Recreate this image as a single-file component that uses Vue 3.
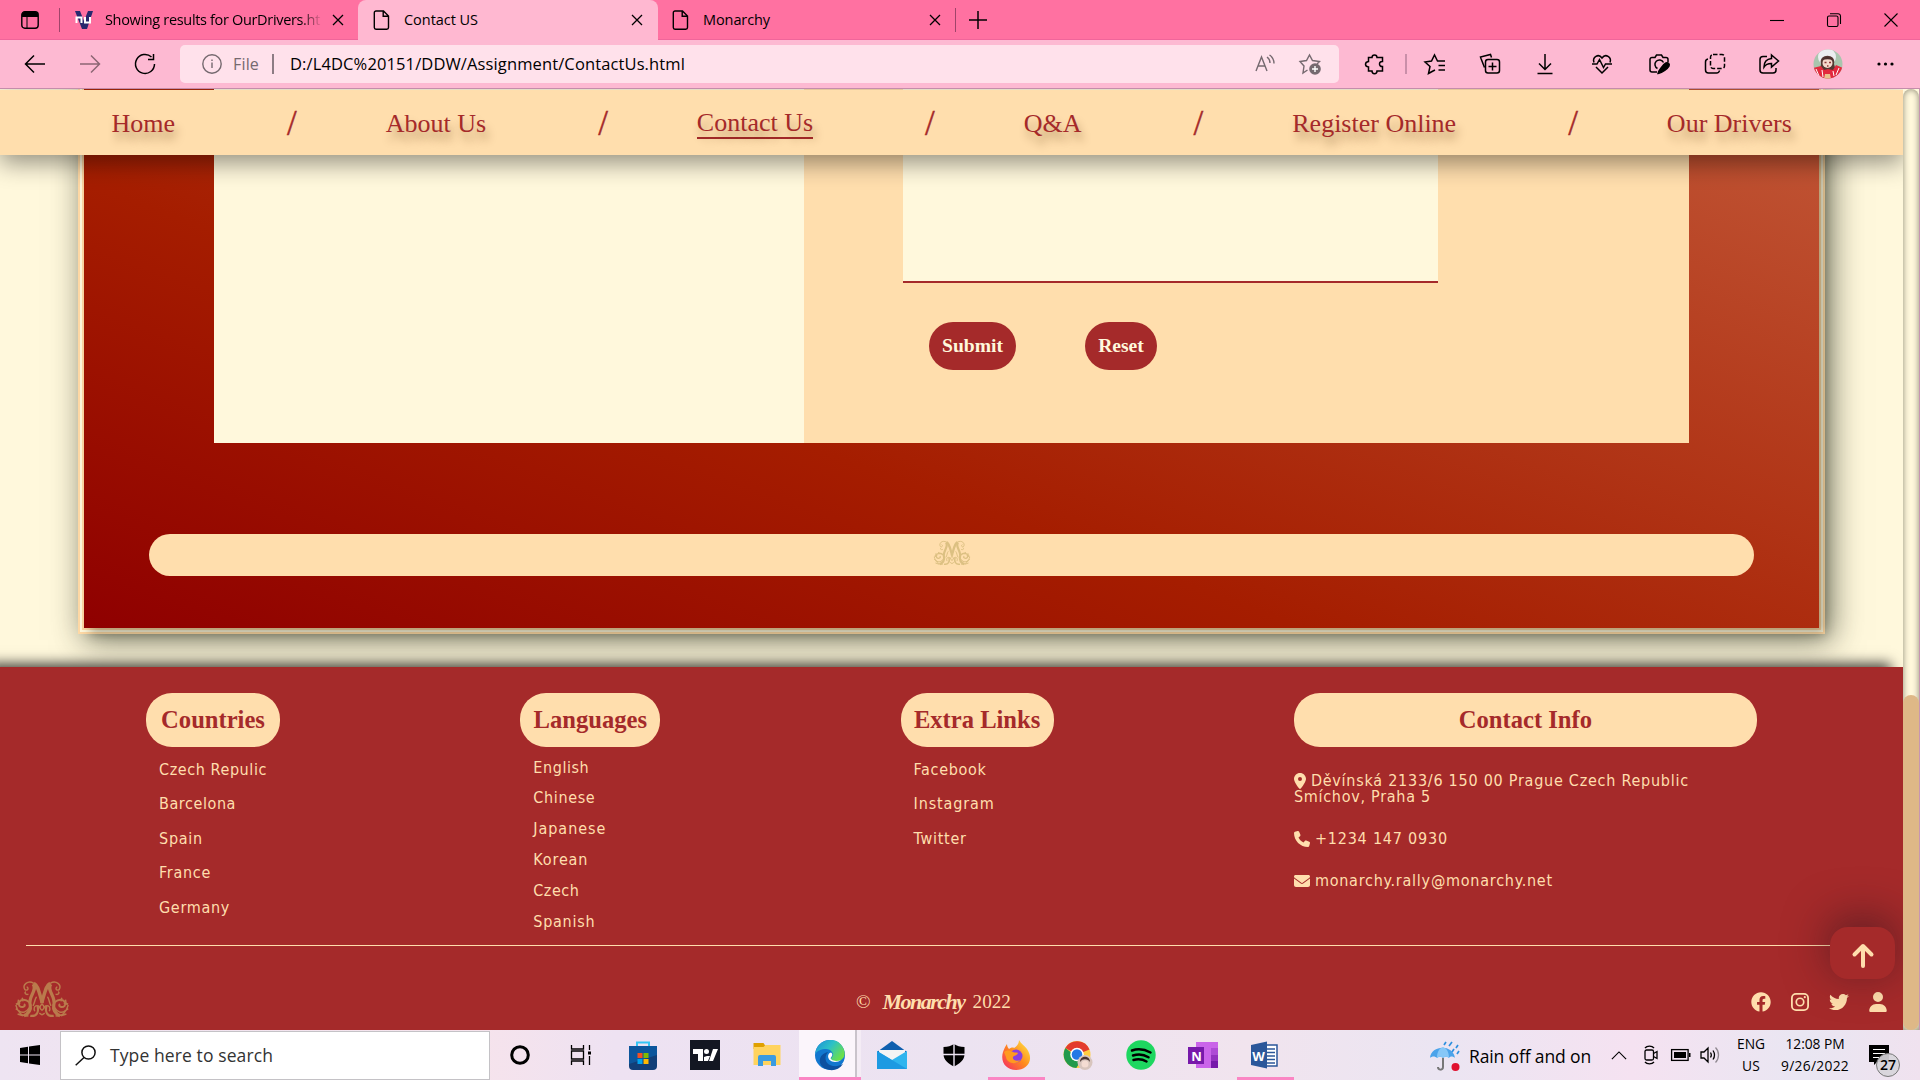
<script setup>
/* Spreads a label over a given width by adjusting its tracking. */
const vFit = {
  mounted(el, { value }) {
    if (!value) return
    const natural = el.getBoundingClientRect().width
    el.style.letterSpacing = (value - natural) / el.textContent.length + 'px'
  },
}

const page = '<path d="M3 1h7.5l5 5v11.500a1.700 1.700 0 0 1-1.700 1.700H3A1.700 1.700 0 0 1 1.300 17.500V2.700A1.700 1.700 0 0 1 3 1zM10.200 1.300v5h5"/>'

const tools = [
  { gap: 35, w: 22, d: '<path d="M8 4.500C8 1 13 1 13 4.500h5.500v4c-4-.5-4 5.500 0 5v4.500H13c0 3.500-5 3.500-5 0H4.500v-4C.5 13.500.5 9 4.500 8.500v-4z"/>' },
  { gap: 19, w: 1, bar: true },
  { gap: 17, w: 22, d: '<path d="M9 18l-4.500 2.500L6 13.500 1 9l6.500-1L10.500 2l3 6H21M14.500 12.500H21M14.500 17H21M9 18l2-1"/>' },
  { gap: 33, w: 22, d: '<path d="M5.500 14.500L2 5.500 1.500 4l10-2.500 1 3"/><rect x="6.500" y="6.500" width="14" height="13.500" rx="2.500"/><path d="M13.500 9.500v8M9.500 13.500h8"/>' },
  { gap: 33, w: 22, d: '<path d="M11 1v15M5 10.500l6 6 6-6M3.500 20.500h15"/>' },
  { gap: 35, w: 22, d: '<path d="M3 9.500C1 4 7.500 0 11 5c3.500-5 10-1 8 4.500M5 14l6 6 6-6M1 11h5l2.500-4.500 4 8L14.500 11H21"/>' },
  { gap: 35, w: 22, d: '<path d="M9 19H4a2 2 0 0 1-2-2V6.500a2 2 0 0 1 2-2h3L8.500 2h5L15 4.500h3a2 2 0 0 1 2 2V9M9.500 15.500a4.500 4.500 0 1 1 6-6"/><path d="M10 20.500c.5-3 5.500-9 8-10.500 2-1 4 1 3 3-1.500 2.500-6.500 7-11 7.500z" fill="currentColor"/>' },
  { gap: 34, w: 22, d: '<path d="M4 6a3 3 0 0 0-2.500 3v8a3 3 0 0 0 3 3h8a3 3 0 0 0 3-2.500"/><rect x="6.500" y="1.500" width="14" height="14" rx="2.500" stroke-dasharray="4.500 2"/>' },
  { gap: 32, w: 22, d: '<path d="M9 3.500H5a3 3 0 0 0-3 3V17a3 3 0 0 0 3 3h10a3 3 0 0 0 3-3v-2"/><path d="M13.500 2l7 6-7 6v-3.500c-4 0-6 1-7.500 3.500 0-5 3-8 7.500-8.500z"/>' },
]

const nav = ['Home', 'About Us', 'Contact Us', 'Q&A', 'Register Online', 'Our Drivers']

const columns = [
  { title: 'Countries', w: 134, cls: 'loose', links: [['Czech Repulic', 108], ['Barcelona', 77], ['Spain', 44], ['France', 52], ['Germany', 71]] },
  { title: 'Languages', w: 140, cls: 'tight', links: [['English', 56], ['Chinese', 62], ['Japanese', 73], ['Korean', 55], ['Czech', 46], ['Spanish', 62]] },
  { title: 'Extra Links', w: 153, cls: 'loose', links: [['Facebook', 73], ['Instagram', 81], ['Twitter', 53]] },
]

const contact = [
  { vb: '0 0 384 512', w: 12, h: 16, text: 'Děvínská 2133/6 150 00 Prague Czech Republic', fit: 378, extra: 'Smíchov, Praha 5', d: 'M215.700 499.200C267 435 384 279.400 384 192 384 86 298 0 192 0S0 86 0 192c0 87.400 117 243 168.300 307.200 12.300 15.300 35.100 15.300 47.400 0zM192 128a64 64 0 1 1 0 128 64 64 0 1 1 0-128z' },
  { vb: '0 0 512 512', w: 16, h: 16, text: '+1234 147 0930', fit: 133, d: 'M164.900 24.600c-7.700-18.600-28-28.500-47.400-23.200l-88 24C12.100 30.200 0 46 0 64c0 247.400 200.600 448 448 448 18 0 33.800-12.100 38.600-29.500l24-88c5.300-19.400-4.600-39.700-23.200-47.400l-96-40c-16.300-6.800-35.200-2.100-46.300 11.600L304.700 368C234.300 334.700 177.300 277.700 144 207.300L193.300 167c13.700-11.200 18.400-30 11.600-46.300l-40-96z' },
  { vb: '0 0 512 512', w: 16, h: 16, text: 'monarchy.rally@monarchy.net', fit: 238, d: 'M48 64C21.500 64 0 85.500 0 112c0 15.100 7.100 29.300 19.200 38.400l217.600 163.200c11.400 8.500 27 8.500 38.400 0l217.600-163.200c12.100-9.100 19.200-23.300 19.200-38.400 0-26.500-21.500-48-48-48H48zM0 176v208c0 35.300 28.700 64 64 64h384c35.300 0 64-28.700 64-64V176L294.400 339.200c-22.800 17.100-54 17.100-76.800 0L0 176z' },
]

const social = [
  { vb: '0 0 512 512', d: 'M504 256C504 119 393 8 256 8S8 119 8 256c0 123.780 90.690 226.380 209.250 245V327.690h-63V256h63v-54.640c0-62.150 37-96.480 93.670-96.480 27.140 0 55.520 4.840 55.520 4.840v61h-31.280c-30.800 0-40.410 19.120-40.410 38.730V256h68.780l-11 71.690h-57.780V501C413.310 482.380 504 379.780 504 256z' },
  { vb: '0 0 20 20', d: 'M6 1h8a5 5 0 0 1 5 5v8a5 5 0 0 1-5 5H6a5 5 0 0 1-5-5V6a5 5 0 0 1 5-5zm0 1.800A3.200 3.200 0 0 0 2.800 6v8A3.200 3.200 0 0 0 6 17.200h8a3.200 3.200 0 0 0 3.200-3.200V6A3.200 3.200 0 0 0 14 2.800zM10 5.400a4.600 4.600 0 1 1 0 9.200 4.600 4.600 0 0 1 0-9.200zm0 1.700a2.900 2.900 0 1 0 0 5.800 2.900 2.900 0 0 0 0-5.800zM14.800 4.100a1.100 1.100 0 1 1 0 2.200 1.100 1.100 0 0 1 0-2.200z' },
  { vb: '0 0 512 512', d: 'M459.370 151.716c.325 4.548.325 9.097.325 13.645 0 138.720-105.583 298.558-298.558 298.558-59.452 0-114.680-17.219-161.137-47.106 8.447.974 16.568 1.299 25.340 1.299 49.055 0 94.213-16.568 130.274-44.832-46.132-.975-84.792-31.188-98.112-72.772 6.498.974 12.995 1.624 19.818 1.624 9.421 0 18.843-1.300 27.614-3.573-48.081-9.747-84.143-51.980-84.143-102.985v-1.299c13.969 7.797 30.214 12.670 47.431 13.319-28.264-18.843-46.781-51.005-46.781-87.391 0-19.492 5.197-37.360 14.294-52.954 51.655 63.675 129.300 105.258 216.365 109.807-1.624-7.797-2.599-15.918-2.599-24.040 0-57.828 46.782-104.934 104.934-104.934 30.213 0 57.502 12.670 76.670 33.137 23.715-4.548 46.456-13.320 66.599-25.340-7.798 24.366-24.366 44.833-46.132 57.827 21.117-2.273 41.584-8.122 60.426-16.243-14.292 20.791-32.161 39.308-52.628 54.253z' },
  { vb: '0 0 448 512', d: 'M224 256a128 128 0 1 0 0-256 128 128 0 1 0 0 256zm-49.700 48C77.800 304 0 381.800 0 478.300 0 496.900 15.100 512 33.700 512h380.600c18.600 0 33.700-15.100 33.700-33.700C448 381.800 370.200 304 273.700 304z' },
]

const crest = '<g id="half"><path d="M20 3C26 9 14 17 17 26c1 6-3 10-7 12" stroke-width="3.600"/><path d="M21 2c5 2 6 12 9.500 22" stroke-width="3.800"/><path d="M21 2C14-2 8 4 11 9c3 2 5-2 2-3M12 11c-2 2 0 4 3 3"/><path d="M16 23C9 17 2 22 5 27c3 3 8 0 5-2" stroke-width="2.200"/><path d="M1 26c2 8 7 13 14 12M4 32c4 4 9 2 12-3M1 30l4 3M3 36l6 2M4 20l-1 6M8 18l1 4M1 25l5-1"/><path d="M17 38c7 1 10-4 8-11" stroke-width="2.400"/><path d="M22 33c-3-6 4-9 6-3M20 27c2-3 2-8 4-10M30 25c-3 2-3 5 0 7M27 35l3 2"/></g>'

const apps = [
  { name: 'store', d: '<path d="M9 8V2.500h12V8" fill="none" stroke="#35c5f5" stroke-width="2"/><path d="M1 6h28v20a4 4 0 0 1-4 4H5a4 4 0 0 1-4-4z" fill="#123f78"/><path d="M1 6h28v9L1 24z" fill="#0b5fa8" opacity=".75"/><path d="M9.500 13h5v5h-5z" fill="#f25022"/><path d="M15.500 13h5v5h-5z" fill="#7fba00"/><path d="M9.500 19h5v5h-5z" fill="#00a4ef"/><path d="M15.500 19h5v5h-5z" fill="#ffb900"/>' },
  { name: 'charts', d: '<path d="M0 0h30v30H0z" fill="#131722"/><path d="M3 9h10v12H8v-7H3zM19 21l4-12h5l-5 12z" fill="#fff"/><circle cx="16.500" cy="11.500" r="2.500" fill="#fff"/><path d="M14 21v-4l3-1h3l-2 5z" fill="#fff"/>' },
  { name: 'files', d: '<path d="M1.500 3h10l2 3v3h-12z" fill="#e0a000"/><path d="M1.500 7h10l2-2h15v20h-27z" fill="#ffd35e"/><path d="M6 26V17a2 2 0 0 1 2-2h14a2 2 0 0 1 2 2v9h-5v-5h-8v5z" fill="#3a9be0"/>' },
  { name: 'edge', open: 'front', d: '<defs><linearGradient id="eg" x1="0" y1="0" x2="1" y2=".6"><stop offset="0" stop-color="#1b8bd8"/><stop offset=".5" stop-color="#2cc0c8"/><stop offset="1" stop-color="#6be04a"/></linearGradient></defs><circle cx="15" cy="15" r="15" fill="#1277cf"/><path d="M1 10C5-2 22-3 27 6c6 9 1 16-7 15-4 0-5-2-3-4 3-3-1-8-6-8-5 0-9 2-11 5z" fill="url(#eg)"/><path d="M13 12c-5 6-2 13 5 14 4 .500 7-.500 10-2-4 6-11 7.500-17 5C2 25 3 14 13 12z" fill="#0c50a0"/><path d="M16 12.500c-4 1-4 7 1 9 3.500 1.200 7 0 9-1.500-3 1-7 1.500-9.500-.5-2.500-2 2-3 .500-6z" fill="#fff"/>' },
  { name: 'mail', d: '<path d="M0 12L15 1l15 11z" fill="#0f5fae"/><path d="M2 10h26v14H2z" fill="#f4f4f4"/><path d="M0 11l15 9 15-9v18H0z" fill="#2fb5ee"/><path d="M0 11l30 18H0z" fill="#1d9ae2"/>' },
  { name: 'shield', d: '<path d="M15 4c3 2 6 3 10.500 3v7c0 6-5 10-10.500 12.500C9.500 24 4.500 20 4.500 14V7C9 7 12 6 15 4z" fill="#000"/><path d="M15 3v24M4 14.500h22" stroke="#ece4f2" stroke-width="1.400"/>' },
  { name: 'firefox', open: 'back', d: '<defs><linearGradient id="ff" x1="1" y1="0" x2="0" y2="1"><stop offset="0" stop-color="#fff14a"/><stop offset=".5" stop-color="#ff8a1d"/><stop offset="1" stop-color="#f5246a"/></linearGradient></defs><path d="M18 0c2 4 5 5 8 9 8 12-1 21-11 21C5 30-1 22 2 12c1-3 2-5 4-8 0 2 1 4 2 5 1-1 4-2 5-1 3-2 5-4 5-8z" fill="url(#ff)"/><circle cx="15" cy="16" r="6.500" fill="#8a3fe0"/><path d="M3 12c4-3 7-1 9 0 2 1 3 0 5 1-1 3-4 2-5 4-1 3 4 5 7 3-3 5-13 4-14-3z" fill="#ff9a20"/>' },
  { name: 'chrome', d: '<circle cx="14" cy="14.500" r="13.500" fill="#ffcd40"/><path d="M14 14.500L2.300 8A13.500 13.500 0 0 1 26.500 9.500z" fill="#e33b2e"/><path d="M2.300 8a13.500 13.500 0 0 0 11 20l5-8z" fill="#229a4c"/><circle cx="14" cy="14.500" r="6.800" fill="#fff"/><circle cx="14" cy="14.500" r="5.300" fill="#2478e5"/><circle cx="22" cy="22.500" r="7.500" fill="#d8c5bd"/><path d="M17 22c0-7 10-7 10 0-2-3-7-4-10 0z" fill="#4a3430"/><circle cx="22" cy="24" r="3.500" fill="#f4dcd2"/>' },
  { name: 'music', d: '<circle cx="15" cy="15" r="14.700" fill="#1ed760"/><path d="M6 10.500c6-2 13-1 18.500 2M7 15.500c5-1.500 11-1 15.500 1.800M7.500 20c4-1 9-.800 13 1.500" fill="none" stroke="#000" stroke-width="2.500" stroke-linecap="round"/>' },
  { name: 'notes', d: '<path d="M8 2h22v26H8z" fill="#ca64ea"/><path d="M23 2h7v9h-7z" fill="#c964e8"/><path d="M23 8h7v7h-7z" fill="#ae4bd5"/><path d="M23 15h7v6h-7z" fill="#9332bf"/><path d="M23 21h7v7h-7z" fill="#7719aa"/><path d="M0 7h16v17H0z" fill="#7719aa"/>', letter: 'N' },
  { name: 'word', open: 'back', d: '<path d="M14 5h13v21H14z" fill="#fff" stroke="#2b579a" stroke-width="1.500"/><path d="M17 9h8M17 12.500h8M17 16h8M17 19.500h8M17 23h8" stroke="#2b579a" stroke-width="1.500"/><path d="M1 5l16-3.500v27L1 25z" fill="#2b579a"/>', letter: 'W' },
]
</script>

<template>
  <div class="screen">
    <header class="tabs">
      <div class="side">
        <svg class="menu" width="18" height="18" viewBox="0 0 18 18"><rect x=".8" y=".8" width="16.400" height="16.400" rx="3" fill="none" stroke="#000" stroke-width="1.400" /><path d="M1 6V3.500A2.500 2.500 0 0 1 3.500 1h11A2.500 2.500 0 0 1 17 3.500V6z" /><path d="M6 6v11" stroke="#000" /></svg>
      </div>
      <div class="tab first">
        <svg class="nu" width="20" height="20" viewBox="0 0 20 20"><path d="M1 1h5l4 10 4-10h5l-6 18H8z" fill="#28286e" /><path d="M2.500 13V7.500h5V13M11 7v5.500h5V7" fill="none" stroke="#fff" stroke-width="2" /></svg>
        <span class="title fade"><span v-fit="215">Showing results for OurDrivers.ht</span></span>
        <svg class="x" width="12" height="12" viewBox="0 0 12 12"><path d="M1 1l10 10M11 1L1 11" /></svg>
      </div>
      <div class="tab active">
        <svg class="file" width="17" height="20" viewBox="0 0 17 20" v-html="page"></svg>
        <span class="title"><span v-fit="74">Contact US</span></span>
        <svg class="x" width="12" height="12" viewBox="0 0 12 12"><path d="M1 1l10 10M11 1L1 11" /></svg>
      </div>
      <div class="tab last">
        <svg class="file" width="17" height="20" viewBox="0 0 17 20" v-html="page"></svg>
        <span class="title"><span v-fit="67">Monarchy</span></span>
        <svg class="x" width="12" height="12" viewBox="0 0 12 12"><path d="M1 1l10 10M11 1L1 11" /></svg>
      </div>
      <svg class="plus" width="18" height="18" viewBox="0 0 18 18"><path d="M9 0v18M0 9h18" /></svg>
      <div class="window">
        <svg width="14" height="14" viewBox="0 0 14 14"><path d="M0 7.500h14" /></svg>
        <svg width="14" height="14" viewBox="0 0 14 14"><rect x=".5" y="3" width="10.500" height="10.500" rx="1.500" /><path d="M3 .7h8a2.500 2.500 0 0 1 2.500 2.500V11" /></svg>
        <svg width="14" height="14" viewBox="0 0 14 14"><path d="M.5.5l13 13M13.500.5l-13 13" /></svg>
      </div>
    </header>

    <div class="toolbar">
      <div class="history">
        <svg width="22" height="20" viewBox="0 0 22 20"><path d="M21 10H1.500M10 1.500L1.500 10l8.500 8.500" /></svg>
        <svg class="off" width="22" height="20" viewBox="0 0 22 20"><path d="M1 10h19.500M12 1.500l8.500 8.500-8.500 8.500" /></svg>
        <svg width="22" height="22" viewBox="0 0 22 22"><path d="M20.500 11a9.500 9.500 0 1 1-3-7M19.500 1v5.500H14" /></svg>
      </div>
      <div class="address">
        <svg class="info" width="20" height="20" viewBox="0 0 20 20"><circle cx="10" cy="10" r="9.200" /><path d="M10 8.500V14M10 5.500v1.400" /></svg>
        <span class="scheme"><span v-fit="26">File</span></span>
        <i></i>
        <span class="url"><span v-fit="395">D:/L4DC%20151/DDW/Assignment/ContactUs.html</span></span>
        <svg class="read" width="20" height="20" viewBox="0 0 20 20"><path d="M1 17L6.500 3l5.500 14M3 12h7.500M12 3c2 1.500 3 3.500 3 6M14.500 1c3 2 4.500 5 4.500 8.500" /></svg>
        <svg class="star" width="22" height="22" viewBox="0 0 22 22"><path d="M8.500 17L4 20l1-7-4-4.500L7.500 7.500 10.500 2l3 5.500 7 1L18 11" /><circle cx="16" cy="16" r="5.800" class="dot" /><path d="M16 13v6M13 16h6" class="add" /></svg>
      </div>
      <div class="tools">
        <template v-for="(t, i) in tools" :key="i">
          <i v-if="t.bar" :style="{ marginLeft: t.gap + 'px' }"></i>
          <svg v-else width="22" height="22" viewBox="0 0 22 22" :style="{ marginLeft: t.gap + 'px' }" v-html="t.d"></svg>
        </template>
        <svg class="avatar" width="30" height="30" viewBox="0 0 30 30">
          <defs><clipPath id="face"><circle cx="15" cy="15" r="14.500" /></clipPath></defs>
          <g clip-path="url(#face)"><path d="M0 0h30v30H0z" fill="#a9c5ae" /><circle cx="14" cy="8" r="9" fill="#eceef0" /><path d="M8 15c-3-11 16-11 13 0l2 7H7z" fill="#553833" /><circle cx="14.500" cy="14" r="5" fill="#f6d8cd" /><path d="M9 11c3-4 8-4 11 0-4-1-7-1-11 0z" fill="#4a2f2c" /><path d="M11.500 13.500h2M16 13.500h2M14 17h1.500" stroke="#8d3a3a" /><path d="M0 19l8-2 3 4 4-1 5 1 3-5 7 3v11H0z" fill="#e22a3e" /><path d="M3 20l3 7M26 19l-3 7M9 21l1 7M20 22l1 5" stroke="#fff" stroke-width="1" /><path d="M12 25h5l1 5h-7z" fill="#e9c08d" /></g>
        </svg>
        <svg class="dots" width="18" height="6" viewBox="0 0 18 6"><circle cx="3" cy="3" r="1.600" /><circle cx="9.500" cy="3" r="1.600" /><circle cx="16" cy="3" r="1.600" /></svg>
      </div>
    </div>

    <div class="page">
      <main>
        <nav>
          <template v-for="(n, i) in nav" :key="n">
            <span v-if="i" class="slash">/</span>
            <a :class="{ current: n === 'Contact Us' }">{{ n }}</a>
          </template>
        </nav>

        <section class="frame">
          <div class="card">
            <div class="panels">
              <div class="cream"></div>
              <div class="form">
                <div class="message"></div>
                <div class="buttons">
                  <button class="submit">Submit</button>
                  <button class="reset">Reset</button>
                </div>
              </div>
            </div>
            <div class="divider">
              <svg width="38" height="29" viewBox="-1 -1 62 43"><g v-html="crest"></g><use href="#half" transform="translate(60 0) scale(-1 1)" /></svg>
            </div>
          </div>
        </section>

        <footer>
          <div class="columns">
            <div v-for="c in columns" :key="c.title" :class="c.cls" :style="{ width: c.w + 'px' }">
              <h3>{{ c.title }}</h3>
              <ul><li v-for="l in c.links" :key="l[0]"><span v-fit="l[1]">{{ l[0] }}</span></li></ul>
            </div>
            <div class="contact">
              <h3>Contact Info</h3>
              <p v-for="c in contact" :key="c.text">
                <span class="row">
                  <svg :width="c.w" :height="c.h" :viewBox="c.vb"><path fill-rule="evenodd" :d="c.d" /></svg>
                  <span v-fit="c.fit">{{ c.text }}</span>
                </span>
                <span v-if="c.extra" class="row"><span v-fit="137">{{ c.extra }}</span></span>
              </p>
            </div>
          </div>
          <hr />
          <div class="legal">
            <svg class="mark" width="56" height="42" viewBox="-1 -1 62 43"><g v-html="crest"></g><use href="#half" transform="translate(60 0) scale(-1 1)" /></svg>
            <div class="copy"><span>©</span><em><span v-fit="82">Monarchy</span></em><span>2022</span></div>
            <div class="social">
              <svg v-for="(s, i) in social" :key="i" width="20" height="20" :viewBox="s.vb"><path fill-rule="evenodd" :d="s.d" /></svg>
            </div>
          </div>
        </footer>

        <div class="top"><svg width="22" height="24" viewBox="0 0 22 24"><path d="M11 22V2.500M2.500 10.500L11 2l8.500 8.500" /></svg></div>
      </main>
      <div class="track"><div class="thumb"></div></div>
    </div>

    <div class="taskbar">
      <div class="start"><svg width="20" height="20" viewBox="0 0 20 20"><path d="M0 3l8-1.200v7.700H0zM9 1.600L20 0v9.500H9zM0 10.500h8v7.700L0 17zM9 10.500h11V20L9 18.400z" /></svg></div>
      <div class="search">
        <svg width="21" height="21" viewBox="0 0 21 21"><circle cx="13.500" cy="7.500" r="6.600" /><path d="M9 12.500L.7 20.300" /></svg>
        <span v-fit="163">Type here to search</span>
      </div>
      <div class="cell ring"><svg width="20" height="20" viewBox="0 0 20 20"><circle cx="10" cy="10" r="8.300" /></svg></div>
      <div class="cell view"><svg width="22" height="20" viewBox="0 0 22 20"><path d="M1.500 0v4h12V0M1.500 20v-4h12v4M1.500 6h12v8h-12zM19.500 0v5M19.500 11v9" /><path d="M18 6.500h3v3h-3z" class="solid" /></svg></div>
      <div v-for="a in apps" :key="a.name" class="cell app" :class="a.open">
        <svg width="30" height="30" viewBox="0 0 30 30"><g v-html="a.d"></g><text v-if="a.letter" x="8.500" y="20.500" text-anchor="middle">{{ a.letter }}</text></svg>
      </div>
      <div class="tray">
        <svg class="rain" width="30" height="30" viewBox="0 0 30 30"><path d="M13 17v9c0 4-5 3-5 0" fill="none" stroke="#777" stroke-width="2" /><path d="M0 17C1 4 23 3 25 17c-2-2-5-2-6 0-2-2-4-2-6 0-2-2-4-2-6 0-2-2-5-2-7 0z" fill="#4ba3ea" /><path d="M7 17C7 10 10 7 13 6c3 1 6 4 6 11-2-2-4-2-6 0-2-2-4-2-6 0z" fill="#86c7f7" /><path d="M16 1l-2 3M22 1l-3 4M28 4l-2 3M24 8l-2 3M29 10l-2 3" stroke="#2d8fdf" stroke-width="1.700" /><circle cx="25.500" cy="26" r="4" fill="#e0112f" /></svg>
        <span class="weather"><span v-fit="122">Rain off and on</span></span>
        <svg class="chev" width="16" height="9" viewBox="0 0 18 10"><path d="M1 9l8-8 8 8" /></svg>
        <svg class="cam" width="16" height="20" viewBox="0 0 16 20"><rect x="2" y="5" width="8.500" height="10" rx="1.500" /><path d="M10.500 8.500l3.500-2v7l-3.500-2M2 3c2-2.500 7-2.500 9 0M2 17c2 2.500 7 2.500 9 0" /></svg>
        <svg class="bat" width="20" height="12" viewBox="0 0 20 12"><rect x=".6" y=".6" width="16.500" height="10.800" /><path d="M3 3h12v6H3zM18 4h1.500v4H18z" class="solid" /></svg>
        <svg class="vol" width="20" height="18" viewBox="0 0 20 18"><path d="M1 6h3l4-4v14l-4-4H1zM10.500 6.500c1 1.500 1 3.500 0 5M13 4.500c2 3 2 6 0 9" /><path d="M15.500 1.500c4 4 4 11 0 15" opacity=".4" /></svg>
        <div class="stack lang"><span v-fit="28">ENG</span><span v-fit="18">US</span></div>
        <div class="stack time"><span v-fit="59">12:08 PM</span><span v-fit="68">9/26/2022</span></div>
        <div class="notes">
          <svg width="21" height="20" viewBox="0 0 21 20"><path d="M0 0h20v17H8l-3 3v-3H0z" /><path d="M4 4.500h12M4 8.500h12M4 12.500h6" stroke="#fff" stroke-width="1.200" /></svg>
          <b>27</b>
        </div>
      </div>
    </div>
  </div>
</template>

<style>
body { margin: 0; overflow: hidden; }
</style>

<style scoped>
.screen { width: 1920px; height: 1080px; overflow: hidden; display: flex; flex-direction: column; font-family: "Open Sans", "Noto Sans", sans-serif; }
.screen * { box-sizing: border-box; }
svg { display: block; flex: none; overflow: visible; }
span { white-space: nowrap; }
.title span, .url span, .scheme span, li span, .row span, .weather span, .copy em span { display: inline-block; }

.tabs { height: 40px; flex: none; background: #ff71a1; border-bottom: 1px solid #f0659a; display: flex; align-items: center; }
.side { width: 60px; height: 24px; border-right: 1px solid #a0446a; display: flex; align-items: center; padding-left: 21px; }
.tab { height: 40px; display: flex; align-items: center; font-size: 14.500px; }
.tab.first { width: 298px; padding: 0 14px; }
.tab.active { width: 300px; padding: 0 15px; background: #ffb8d1; border-radius: 8px 8px 0 0; }
.tab.last { width: 298px; height: 24px; padding: 0 14px; border-right: 1px solid #a0446a; }
.title { flex: 1; overflow: hidden; line-height: 24px; padding-top: 1px; }
.nu { margin-right: 11px; }
.file { margin-right: 14px; fill: none; stroke: #000; stroke-width: 1.400; }
.fade { margin-right: 10px; mask-image: linear-gradient(90deg, #000 90%, transparent); }
.x { stroke: #000; stroke-width: 1.300; }
.plus { margin-left: 13px; stroke: #000; stroke-width: 1.500; }
.window { margin-left: auto; display: flex; gap: 43px; margin-right: 22px; }
.window svg { fill: none; stroke: #000; stroke-width: 1.100; }

.toolbar { height: 49px; flex: none; background: #fdb9d2; border-bottom: 1px solid #c48dab; display: flex; align-items: center; padding-bottom: 1px; }
.history { width: 180px; display: flex; align-items: center; gap: 33px; padding-left: 24px; }
.history svg, .tools svg { fill: none; stroke: #000; stroke-width: 1.500; color: #000; }
.history .off { opacity: .45; }
.address { width: 1159px; height: 38px; border-radius: 5px; background: #ffe1eb; display: flex; align-items: center; padding-left: 22px; }
.address svg { fill: none; stroke: #75696f; stroke-width: 1.400; }
.scheme { color: #75696f; font-size: 16px; margin-left: 11px; width: 39px; }
.address i { width: 2px; height: 20px; background: #8d7c84; margin-right: 16px; }
.url { font-size: 16.500px; flex: 1; }
.read { margin-right: 24px; }
.star { margin-right: 18px; }
.star .dot { fill: #75696f; stroke: none; }
.star .add { stroke: #fff; }
.tools { display: flex; align-items: center; margin-left: -10px; }
.tools i { width: 2px; height: 20px; background: #c98fa9; }
.tools .avatar { margin-left: 33px; stroke: none; }
.tools .dots { margin-left: 33px; fill: #000; stroke: none; }

.page { height: 941px; flex: none; display: flex; background: #fff8dc; border-right: 1px solid #c795b1; overflow: hidden; }
main { width: 1903px; height: 941px; position: relative; overflow: hidden; background: #fff8dc; }
nav { position: absolute; z-index: 3; left: 0; top: 1px; width: 1903px; height: 65px; background: #ffdead; box-shadow: 0 8px 25px rgba(0, 0, 0, .42); display: flex; align-items: center; padding-left: 111.500px; font: 26px/30px "Liberation Serif", serif; color: #a52a2a; }
nav a { white-space: nowrap; text-shadow: 3px 8px 8px rgba(80, 50, 10, .4); padding-top: 2px; }
nav a.current { border-bottom: 2px solid #a52a2a; margin: -1px 0; line-height: 29px; }
.slash { width: 10px; margin: 3px 88.700px 0 112px; font-size: 35px; -webkit-text-stroke: .4px #a52a2a; }
.frame { height: 545px; margin: 0 78px; border: 6px double #ffd9a5; border-top: 0; box-shadow: 6px 6px 30px rgba(25, 30, 15, .62); }
.card { height: 539px; background: linear-gradient(20deg, #8f0000 0%, #a51d00 38%, #c25838 100%); box-shadow: 6px 6px 10px rgba(25, 30, 15, .34); }
.panels { margin: 0 130px; height: 354px; display: flex; }
.cream { width: 590px; background: #fff8dc; }
.form { flex: 1; background: #ffdead; padding-left: 99px; }
.message { width: 535px; height: 194px; background: #fff8dc; border-bottom: 2px solid #a52a2a; }
.buttons { display: flex; gap: 69px; padding: 39px 0 0 26px; }
button { height: 48px; border: 0; border-radius: 24px; background: #a52a2a; color: #fff8dc; padding: 0; font: bold 19.600px/48px "Liberation Serif", serif; }
.submit { width: 87px; }
.reset { width: 72px; }
.divider { margin: 91px 65px 0; height: 42px; border-radius: 21px; background: #ffdead; display: flex; justify-content: center; padding-top: 5px; }
.divider svg, .mark { fill: none; stroke: #dcc082; stroke-width: 1.600; }

footer { position: relative; height: 363px; margin-top: 33px; background: #a52a2a; box-shadow: -12px -4px 12px rgba(0, 0, 0, .7); color: #ffdead; }
.columns { height: 278px; padding: 26px 0 0 146px; display: flex; gap: 240.300px; font: 16px "DejaVu Sans Condensed", "DejaVu Sans", sans-serif; }
h3 { margin: 0; height: 54px; border-radius: 26px; background: #ffdead; color: #a52a2a; font: bold 24.600px/53px "Liberation Serif", serif; text-align: center; }
ul { list-style: none; margin: 5.500px 0 0; padding: 0 0 0 13px; }
.loose li { height: 34.500px; line-height: 34.500px; }
.tight li { height: 30.850px; line-height: 30.850px; }
.contact { width: 463px; }
.contact p { margin: 26px 0 0; }
.row { display: flex; gap: 5px; height: 16px; line-height: 16px; align-items: center; }
.row svg { fill: #ffdead; }
hr { margin: 0 26px; border: 0; height: 1px; background: #ffdead; }
.legal { display: flex; height: 84px; align-items: center; padding: 27px 15px 0 14px; position: relative; }
.mark { stroke: #ba7a4c; margin-top: -3px; }
.copy { margin-left: 786px; display: flex; align-items: center; font: 19.200px/30px "Liberation Serif", serif; }
.copy em { font-family: "Z003", "URW Chancery L", "Liberation Serif", cursive; font-weight: bold; font-size: 22px; margin: 0 8px 0 12px; }
.social { margin-left: auto; display: flex; gap: 19px; }
.social svg { fill: #ffdead; }
.top { position: absolute; z-index: 2; left: 1830px; top: 838px; width: 65px; height: 52px; border-radius: 18px; background: #a52a2a; box-shadow: 0 -8px 45px rgba(40, 20, 30, .6); display: flex; align-items: center; justify-content: center; padding-top: 6px; }
.top svg { fill: none; stroke: #ffdead; stroke-width: 4; stroke-linecap: round; stroke-linejoin: round; }
.track { width: 16px; height: 941px; background: #fff8dc; border-radius: 8px 8px 0 0; box-shadow: inset 0 0 6px #8a8672; padding-top: 606px; }
.thumb { height: 335px; border-radius: 8px; background: #deb887; }

.taskbar { height: 50px; flex: none; display: flex; align-items: center; background: linear-gradient(90deg, #eee4f2, #f6e3ec 25%, #eee2f2 32%, #ece3f1 50%, #f1e4ee 65%, #ebe5f2 75%, #f5e2f1 85%, #e9e6f2 94%, #f0e2ef); }
.start { width: 60px; padding-left: 20px; }
.search { width: 430px; height: 49px; background: #fff; border: 1px solid #c4c2c6; display: flex; align-items: center; padding-left: 14px; gap: 14px; font-size: 17.500px; color: #333; margin-top: 1px; }
.search span { margin-top: -2px; }
.search svg { fill: none; stroke: #111; stroke-width: 1.500; }
.cell { height: 50px; display: flex; align-items: center; justify-content: center; }
.ring { width: 60px; fill: none; stroke: #000; stroke-width: 3; }
.view { width: 62px; fill: none; stroke: #000; stroke-width: 1.300; }
.solid { fill: #000; stroke: none; }
.app { width: 62.200px; }
.app text { fill: #fff; font: bold 13px "Open Sans", sans-serif; }
.app.front { background: linear-gradient(90deg, #fbf5fb 56px, #c9c3cb 56px 58px, #f4ecf5 58px); border-bottom: 3px solid #fb86c4; padding-top: 3px; }
.app.back { border-bottom: 3px solid #fb86c4; border-left: 0; padding-top: 3px; position: relative; background: none; border-image: linear-gradient(90deg, transparent 6px, #fb86c4 6px 57px, transparent 57px) 3; }
.tray { margin-left: auto; display: flex; align-items: center; height: 50px; width: 490px; flex: none; border: 0; }
.tray svg { fill: none; stroke: #000; stroke-width: 1.300; }
.tray .rain { stroke: none; margin-top: 2px; }
.weather { font-size: 17.500px; margin: 2px 0 0 9px; width: 142px; }
.chev { margin-right: 16px; }
.cam { margin-right: 12px; }
.tray .bat { margin-right: 9px; }
.tray .vol { margin-right: 0; }
.stack { display: flex; flex-direction: column; align-items: center; font-size: 13.800px; line-height: 22.500px; }
.lang { margin-left: 16px; width: 30px; }
.time { margin-left: 14px; width: 70px; }
.notes { position: relative; margin-left: 19px; margin-top: -1px; }
.notes svg { fill: #000; stroke: none; }
.notes b { position: absolute; left: 7px; top: 8px; width: 24px; height: 24px; border: 1px solid #777; border-radius: 50%; background: rgba(215, 213, 218, .92); font: 600 14px/21px "Open Sans", sans-serif; text-align: center; }
</style>
